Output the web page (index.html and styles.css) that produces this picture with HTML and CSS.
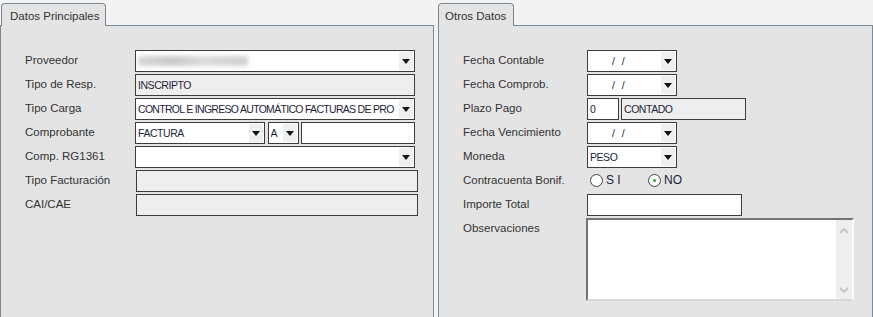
FILE: index.html
```html
<!DOCTYPE html>
<html lang="es">
<head>
    <meta charset="UTF-8">
    <title>Comprobante</title>
    <link rel="stylesheet" href="styles.css">
</head>
<body>

<div class="tabs">
    <div class="panel panel-left">
        <div class="tab tab-left">Datos Principales</div>
        <div class="panel-body">
            <div class="form form-left">
                <div class="label">Proveedor</div>
                <div class="field select"><span class="blur"></span><span class="arrow"></span></div>

                <div class="label">Tipo de Resp.</div>
                <div class="field readonly"><span class="value">INSCRIPTO</span></div>

                <div class="label">Tipo Carga</div>
                <div class="field select"><span class="value long">CONTROL E INGRESO AUTOMÁTICO FACTURAS DE PRO</span><span class="arrow"></span></div>

                <div class="label">Comprobante</div>
                <div class="group">
                    <div class="field select w-factura"><span class="value">FACTURA</span><span class="arrow"></span></div>
                    <div class="field select w-letra"><span class="value">A</span><span class="arrow"></span></div>
                    <div class="field w-numero"></div>
                </div>

                <div class="label">Comp. RG1361</div>
                <div class="field select"><span class="arrow"></span></div>

                <div class="label">Tipo Facturación</div>
                <div class="field readonly shifted"></div>

                <div class="label">CAI/CAE</div>
                <div class="field readonly shifted"></div>
            </div>
        </div>
    </div>

    <div class="panel panel-right">
        <div class="tab tab-right">Otros Datos</div>
        <div class="panel-body">
            <div class="form form-right">
                <div class="label">Fecha Contable</div>
                <div class="field select date w-fecha"><span class="value">/&nbsp;&nbsp;&nbsp;/</span><span class="arrow"></span></div>

                <div class="label">Fecha Comprob.</div>
                <div class="field select date w-fecha"><span class="value">/&nbsp;&nbsp;&nbsp;/</span><span class="arrow"></span></div>

                <div class="label">Plazo Pago</div>
                <div class="group">
                    <div class="field w-plazo"><span class="value">0</span></div>
                    <div class="field readonly w-contado"><span class="value">CONTADO</span></div>
                </div>

                <div class="label">Fecha Vencimiento</div>
                <div class="field select date w-fecha"><span class="value">/&nbsp;&nbsp;&nbsp;/</span><span class="arrow"></span></div>

                <div class="label">Moneda</div>
                <div class="field select w-fecha"><span class="value">PESO</span><span class="arrow"></span></div>

                <div class="label">Contracuenta Bonif.</div>
                <div class="radios">
                    <span class="radio"></span><span class="radio-text">S I</span>
                    <span class="radio checked"></span><span class="radio-text">NO</span>
                </div>

                <div class="label">Importe Total</div>
                <div class="field w-importe"></div>

                <div class="label">Observaciones</div>
                <div class="memo">
                    <div class="memo-scroll">
                        <svg width="10" height="6" viewBox="0 0 10 6"><polyline points="1,5 5,1 9,5" fill="none" stroke="#c6c6c6" stroke-width="2"/></svg>
                        <svg width="10" height="6" viewBox="0 0 10 6"><polyline points="1,1 5,5 9,1" fill="none" stroke="#c6c6c6" stroke-width="2"/></svg>
                    </div>
                </div>
            </div>
        </div>
    </div>
</div>

</body>
</html>
```

FILE: styles.css
```css
body {
    margin: 0;
    background-color: #f3f3f3;
    font-family: "Liberation Sans", Arial, sans-serif;
    font-size: 11.5px;
    color: #333;
}
.tabs {
    display: flex;
    gap: 4px;
    height: 317px;
    padding-top: 3px;
    box-sizing: border-box;
}
.panel {
    display: flex;
    flex-direction: column;
}
.panel-left {
    width: 434px;
}
.panel-right {
    width: 435px;
}
.tab {
    align-self: flex-start;
    height: 23px;
    box-sizing: border-box;
    border: 1px solid #7b8a94;
    border-bottom: none;
    border-radius: 4px 4px 0 0;
    background-color: #e4e4e4;
    line-height: 24px;
    padding-left: 8px;
    color: #333;
    position: relative;
    z-index: 1;
    margin-bottom: -1px;
}
.tab-left {
    width: 105px;
    margin-left: 1px;
}
.tab-right {
    width: 76px;
    padding-left: 6px;
}
.panel-body {
    flex: 1;
    border: 1px solid #7b8a94;
    border-bottom: none;
    background-color: #e4e4e4;
    padding: 24px 0 0 24px;
}
.form {
    display: grid;
    grid-auto-rows: 22px;
    row-gap: 2px;
}
.form-left {
    grid-template-columns: 110px 280px;
}
.form-right {
    grid-template-columns: 124px 270px;
}
.label {
    line-height: 20px;
    color: #333;
    white-space: nowrap;
}
.field {
    position: relative;
    box-sizing: border-box;
    height: 22px;
    border: 1px solid #3c3c3c;
    background-color: #fff;
    padding: 0 2px;
    line-height: 20px;
    font-size: 10.5px;
    color: #1e1e3a;
    white-space: nowrap;
    overflow: hidden;
}
.field.readonly {
    background-color: #eeeeee;
}
.field.shifted {
    margin-left: 1px;
    width: 282px;
}
.value {
    display: block;
    overflow: hidden;
    letter-spacing: -0.45px;
}
.value.long {
    letter-spacing: -0.7px;
}
.select {
    padding-right: 16px;
}
.arrow {
    position: absolute;
    top: 1px;
    right: 1px;
    bottom: 1px;
    width: 14px;
    background-color: #efefef;
}
.arrow::after {
    content: "";
    position: absolute;
    left: 3px;
    top: 7px;
    border-left: 4px solid transparent;
    border-right: 4px solid transparent;
    border-top: 5px solid #111;
}
.blur {
    display: inline-block;
    width: 110px;
    height: 10px;
    margin-top: 5px;
    background: linear-gradient(90deg, #d8d8d8, #c8c8c8 30%, #dcdcdc 60%, #cfcfcf);
    filter: blur(2px);
}
.group {
    display: flex;
}
.w-factura {
    width: 130px;
    margin-right: 3px;
}
.w-letra {
    width: 32px;
    margin-right: 2px;
}
.w-numero {
    width: 114px;
}
.w-fecha {
    width: 90px;
}
.date {
    padding-left: 24px;
}
.w-plazo {
    width: 32px;
    margin-right: 2px;
}
.w-contado {
    width: 125px;
}
.w-importe {
    width: 155px;
}
.radios {
    display: flex;
    align-items: center;
    padding-left: 3px;
    height: 20px;
    font-size: 12px;
    color: #1e1e3a;
}
.radio {
    width: 11px;
    height: 11px;
    border: 1px solid #3c4650;
    border-radius: 50%;
    background-color: #fff;
    position: relative;
    margin-right: 3px;
}
.radio.checked::after {
    content: "";
    position: absolute;
    left: 4px;
    top: 4px;
    width: 3px;
    height: 3px;
    border-radius: 50%;
    background-color: #2ea42e;
}
.radio-text {
    width: 42px;
}
.memo {
    grid-row: span 4;
    margin-left: -1px;
    width: 268px;
    height: 83px;
    box-sizing: border-box;
    border-top: 2px solid #747474;
    border-left: 2px solid #747474;
    border-right: 2px solid #fafafa;
    border-bottom: 2px solid #d8d8d8;
    background-color: #fff;
    display: flex;
    justify-content: flex-end;
}
.memo-scroll {
    width: 16px;
    background-color: #efefef;
    display: flex;
    flex-direction: column;
    justify-content: space-between;
    align-items: center;
    padding: 8px 0 6px;
}
```
